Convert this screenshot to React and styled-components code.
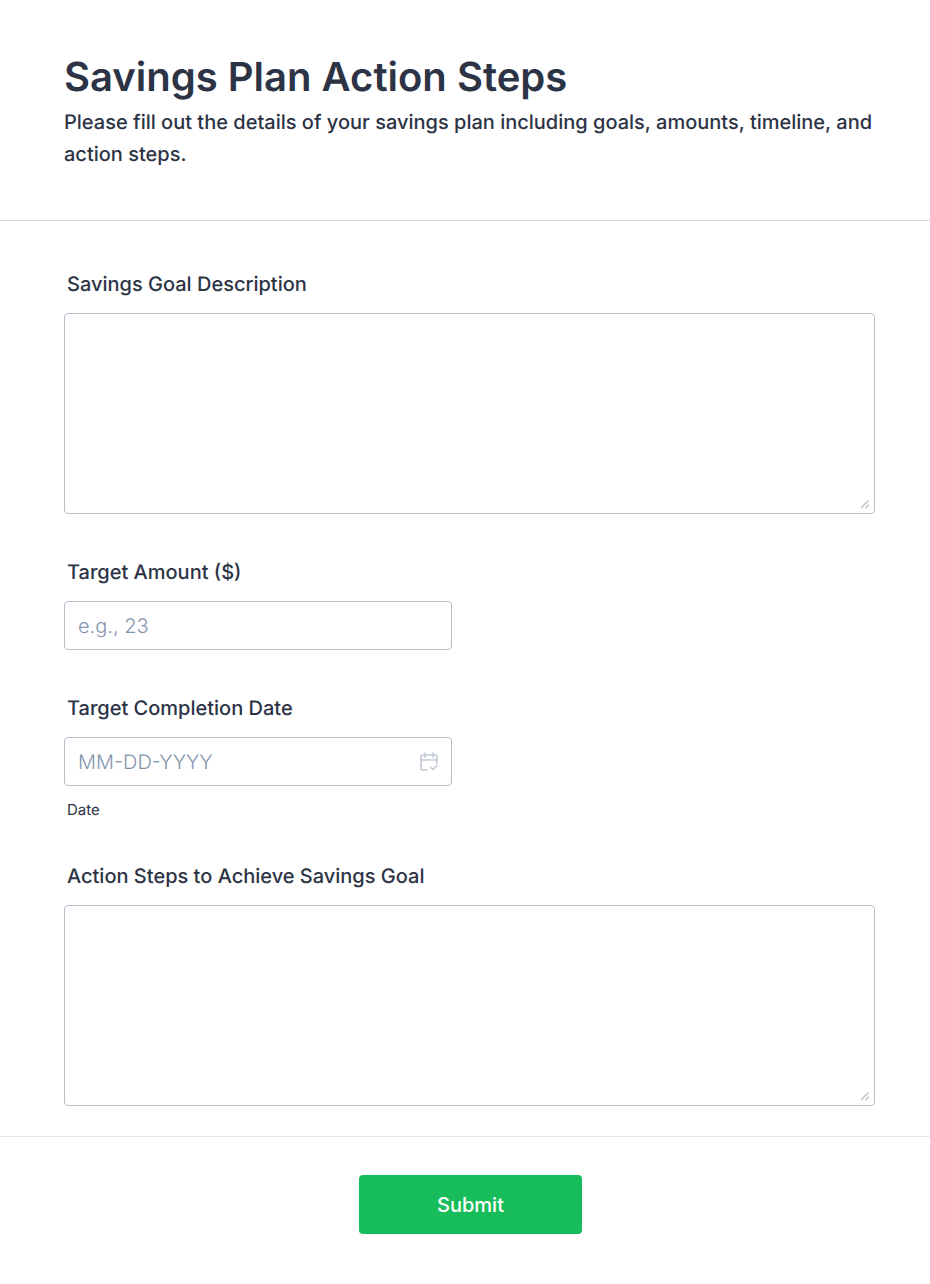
import React from 'react'
import styled, { createGlobalStyle, css } from 'styled-components'

const GlobalStyle = createGlobalStyle`
    * {
        box-sizing: border-box;
    }
    body {
        margin: 0;
        background: #fff;
        color: #2c3345;
        font-family: Inter, "Liberation Sans", sans-serif;
        text-rendering: geometricPrecision;
    }
`
const Header = styled.header`
    padding: 52px 55px 50px 64px;
    border-bottom: 1px solid #d7d8e1;
`
const Title = styled.h1`
    margin: 0;
    font-size: 40px;
    line-height: 50px;
    font-weight: 600;
`
const Subtitle = styled.p`
    margin: 4px 0 0;
    font-size: 20px;
    line-height: 32px;
    font-weight: 500;
`
const Fields = styled.div`
    display: flex;
    flex-direction: column;
    gap: 45px;
    padding: 50px 55px 30px 64px;
`
const Field = styled.div`
    display: flex;
    flex-direction: column;
`
const Label = styled.label`
    margin-bottom: 16px;
    padding-left: 3px;
    font-size: 20px;
    line-height: 26px;
    font-weight: 500;
`
const control = css`
    border: 1px solid #b8bdc9;
    border-radius: 4px;
    background: #fff;
    color: #2c3345;
    font-family: inherit;
    font-size: 20px;
    text-rendering: inherit;
    outline: none;
`
const TextArea = styled.textarea`
    ${control}
    display: block;
    width: 100%;
    height: 201px;
    padding: 12px;
    resize: none;
`
const AreaBox = styled.div`
    position: relative;
`
const Grip = styled.svg`
    position: absolute;
    right: 5px;
    bottom: 5px;
    pointer-events: none;
`
const InputBox = styled.div`
    position: relative;
    width: 388px;
    max-width: 100%;
`
const Input = styled.input`
    ${control}
    display: block;
    width: 100%;
    height: 49px;
    padding: 0 13px;
    font-weight: 300;

    &::placeholder {
        color: #8494ae;
        opacity: 1;
    }
`
const DateIcon = styled.svg`
    position: absolute;
    top: 15px;
    right: 14px;
    pointer-events: none;
`
const SubLabel = styled.span`
    margin-top: 15px;
    padding-left: 3px;
    font-size: 15px;
    line-height: 17px;
`
const Footer = styled.footer`
    display: flex;
    justify-content: center;
    padding: 38px 55px 50px 66px;
    border-top: 1px solid #e8e9f0;
`
const SubmitButton = styled.button`
    width: 223px;
    height: 59px;
    border: 0;
    border-radius: 4px;
    background: #18bd5b;
    color: #fff;
    font-family: inherit;
    font-size: 20px;
    font-weight: 500;
    cursor: pointer;
`

const LongField = ({ id, label }) => {
    return (
        <Field>
            <Label htmlFor={id}>{label}</Label>
            <AreaBox>
                <TextArea id={id} />
                <Grip width="10" height="10" viewBox="0 0 10 10" fill="none" stroke="#b8bdc9" strokeWidth="1.3">
                    <path d="M1 9L8.500 1.500M5.500 9L9 5.500" />
                </Grip>
            </AreaBox>
        </Field>
    )
}

const App = () => {
    return (
        <form onSubmit={(e) => e.preventDefault()}>
            <GlobalStyle />
            <Header>
                <Title>Savings Plan Action Steps</Title>
                <Subtitle>
                    Please fill out the details of your savings plan including goals, amounts, timeline, and action steps.
                </Subtitle>
            </Header>
            <Fields>
                <LongField id="goal" label="Savings Goal Description" />
                <Field>
                    <Label htmlFor="amount">Target Amount ($)</Label>
                    <InputBox>
                        <Input id="amount" placeholder="e.g., 23" />
                    </InputBox>
                </Field>
                <Field>
                    <Label htmlFor="date">Target Completion Date</Label>
                    <InputBox>
                        <Input id="date" placeholder="MM-DD-YYYY" aria-describedby="date-hint" />
                        <DateIcon width="18" height="20" viewBox="0 0 18 20" fill="none" stroke="#c3cad8" strokeWidth="1.7" strokeLinecap="round" strokeLinejoin="round">
                            <path d="M7 18H3a2 2 0 0 1-2-2V5a2 2 0 0 1 2-2h12a2 2 0 0 1 2 2v6M1 8h16M5 1v4M13 1v4M11 15.500l2 2 4-4" />
                        </DateIcon>
                    </InputBox>
                    <SubLabel id="date-hint">Date</SubLabel>
                </Field>
                <LongField id="steps" label="Action Steps to Achieve Savings Goal" />
            </Fields>
            <Footer>
                <SubmitButton type="submit">Submit</SubmitButton>
            </Footer>
        </form>
    )
}

export default App
